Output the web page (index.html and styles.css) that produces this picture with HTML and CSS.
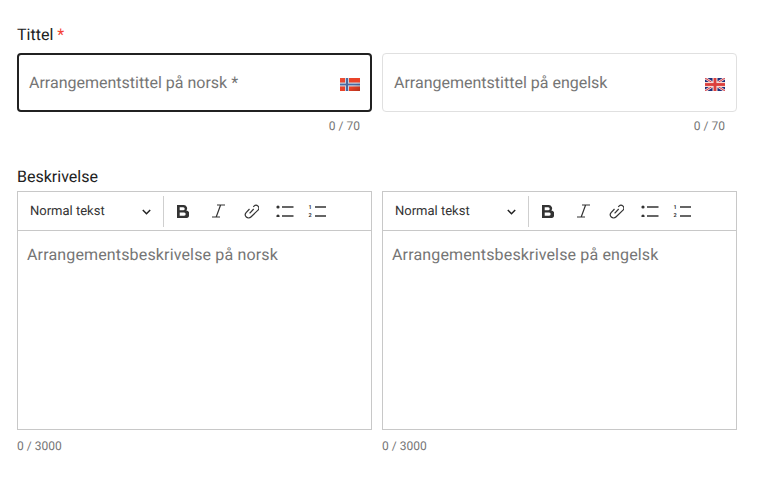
FILE: index.html
```html
<!DOCTYPE html>
<html lang="no">
<head>
<meta charset="utf-8">
<title>Arrangement</title>
<link rel="stylesheet" href="styles.css">
</head>
<body>
<main class="form">
  <section class="group group-title">
    <label class="label">Tittel <span class="req">*</span></label>
    <div class="columns">
      <div class="field">
        <div class="input focused"><span class="placeholder">Arrangementstittel på norsk *</span>
          <svg class="flag" viewBox="0 0 20 13"><defs><linearGradient id="shA" x1="0" y1="0" x2="1" y2="1"><stop offset="0" stop-color="#fff" stop-opacity=".08"/><stop offset=".6" stop-color="#000" stop-opacity="0"/><stop offset="1" stop-color="#000" stop-opacity=".25"/></linearGradient></defs><rect width="20" height="13" fill="#ed4328"/><rect x="5" width="4" height="13" fill="#cfd3e0"/><rect y="4.5" width="20" height="4" fill="#cfd3e0"/><rect x="6.2" width="1.6" height="13" fill="#27508f"/><rect y="5.7" width="20" height="1.6" fill="#4a6ba3"/><rect width="20" height="13" fill="url(#shA)"/></svg>
        </div>
        <div class="count count-right">0 / 70</div>
      </div>
      <div class="field">
        <div class="input"><span class="placeholder">Arrangementstittel på engelsk</span>
          <svg class="flag" viewBox="0 0 20 13"><rect width="20" height="13" fill="#1f2f7a"/><path d="M0 0L20 13M20 0L0 13" stroke="#f3d6d6" stroke-width="2.6"/><path d="M0 0L20 13M20 0L0 13" stroke="#d5404a" stroke-width="1"/><rect x="7.5" width="5" height="13" fill="#f6dcd6"/><rect y="4" width="20" height="5" fill="#f6dcd6"/><rect x="8.6" width="2.8" height="13" fill="#dc3f3c"/><rect y="5.1" width="20" height="2.8" fill="#dc3f3c"/></svg>
        </div>
        <div class="count count-right">0 / 70</div>
      </div>
    </div>
  </section>
  <section class="group">
    <label class="label">Beskrivelse</label>
    <div class="columns">
      <div class="field">
        <div class="editor">
          <div class="toolbar">
            <div class="select"><span>Normal tekst</span>
              <svg class="chev" viewBox="0 0 9 6"><path d="M.8 1l3.7 3.7L8.2 1" fill="none" stroke="#222" stroke-width="1.5"/></svg>
            </div>
            <span class="divider"></span>
            <svg class="tool t-b" viewBox="0 0 12 13"><path d="M0 0h6.6a3.4 3.4 0 0 1 2.7 5.6A3.6 3.6 0 0 1 8 13H0zM2.7 2.3v3h3.5a1.5 1.5 0 0 0 0-3zM2.7 7.5v3.2h4.4a1.6 1.6 0 0 0 0-3.2z" fill="#333" fill-rule="evenodd"/></svg>
            <svg class="tool t-i" viewBox="0 0 13 14"><path d="M5 1h8M0 13h8M8.6 1L4.2 13" fill="none" stroke="#333" stroke-width="1.2"/></svg>
            <svg class="tool t-l" viewBox="0 0 15 15"><g fill="none" stroke="#333" stroke-width="1.2"><path d="M9.3 2.9l.7-.8a2.9 2.9 0 0 1 4 .1 2.9 2.9 0 0 1 0 4L6.9 13a3.2 3.2 0 0 1-4.6 0 3.2 3.2 0 0 1-.2-4.4L5.5 5"/><path d="M5.6 9.4L9.7 5"/></g></svg>
            <svg class="tool t-u" viewBox="0 0 18 12"><circle cx="2" cy="2" r="1.6" fill="#333"/><circle cx="2" cy="11" r="1.6" fill="#333"/><path d="M6 2h11.5M6 11h11.5" stroke="#333" stroke-width="1.3"/></svg>
            <svg class="tool t-o" viewBox="0 0 18 12"><text x="0.5" y="4.4" class="num">1</text><text x="0.5" y="12" class="num">2</text><path d="M7 2h11M7 11h11" stroke="#333" stroke-width="1.3"/></svg>
          </div>
          <div class="area"><span class="placeholder">Arrangementsbeskrivelse på norsk</span></div>
        </div>
        <div class="count">0 / 3000</div>
      </div>
      <div class="field">
        <div class="editor">
          <div class="toolbar">
            <div class="select"><span>Normal tekst</span>
              <svg class="chev" viewBox="0 0 9 6"><path d="M.8 1l3.7 3.7L8.2 1" fill="none" stroke="#222" stroke-width="1.5"/></svg>
            </div>
            <span class="divider"></span>
            <svg class="tool t-b" viewBox="0 0 12 13"><path d="M0 0h6.6a3.4 3.4 0 0 1 2.7 5.6A3.6 3.6 0 0 1 8 13H0zM2.7 2.3v3h3.5a1.5 1.5 0 0 0 0-3zM2.7 7.5v3.2h4.4a1.6 1.6 0 0 0 0-3.2z" fill="#333" fill-rule="evenodd"/></svg>
            <svg class="tool t-i" viewBox="0 0 13 14"><path d="M5 1h8M0 13h8M8.6 1L4.2 13" fill="none" stroke="#333" stroke-width="1.2"/></svg>
            <svg class="tool t-l" viewBox="0 0 15 15"><g fill="none" stroke="#333" stroke-width="1.2"><path d="M9.3 2.9l.7-.8a2.9 2.9 0 0 1 4 .1 2.9 2.9 0 0 1 0 4L6.9 13a3.2 3.2 0 0 1-4.6 0 3.2 3.2 0 0 1-.2-4.4L5.5 5"/><path d="M5.6 9.4L9.7 5"/></g></svg>
            <svg class="tool t-u" viewBox="0 0 18 12"><circle cx="2" cy="2" r="1.6" fill="#333"/><circle cx="2" cy="11" r="1.6" fill="#333"/><path d="M6 2h11.5M6 11h11.5" stroke="#333" stroke-width="1.3"/></svg>
            <svg class="tool t-o" viewBox="0 0 18 12"><text x="0.5" y="4.4" class="num">1</text><text x="0.5" y="12" class="num">2</text><path d="M7 2h11M7 11h11" stroke="#333" stroke-width="1.3"/></svg>
          </div>
          <div class="area"><span class="placeholder">Arrangementsbeskrivelse på engelsk</span></div>
        </div>
        <div class="count">0 / 3000</div>
      </div>
    </div>
  </section>
</main>
</body>
</html>
```
FILE: styles.css
```css
* { box-sizing: border-box; }
html, body { margin: 0; padding: 0; background: #fff; }
body { font-family: Roboto, "Liberation Sans", sans-serif; color: #212121; text-rendering: geometricPrecision; }
.form { padding: 26px 0 0 17px; width: 765px; }
.group-title { height: 142px; }
.label { display: block; font-size: 16px; line-height: 18px; margin-bottom: 9px; }
.group:not(.group-title) .label { margin-bottom: 5px; }
.req { color: #f44336; }
.columns { display: grid; grid-template-columns: 355px 355px; column-gap: 10px; }
.input { height: 59px; border: 1px solid #e0e0e0; border-radius: 4px; display: flex; align-items: center; justify-content: space-between; padding: 0 11px; }
.input.focused { border: 2px solid #212121; padding: 0 10px; }
.placeholder { font-size: 16px; color: #757575; line-height: 20px; }
.area .placeholder { letter-spacing: .15px; }
.flag { width: 20px; height: 13px; flex: none; filter: blur(.3px); margin-top: 3px; }
.count { font-size: 12px; line-height: 14px; color: #757575; margin-top: 9px; }
.count-right { text-align: right; padding-right: 12px; margin-top: 7px; }
.editor { height: 239px; border: 1px solid #c8c8c8; }
.toolbar { height: 39px; border-bottom: 1px solid #c8c8c8; display: flex; align-items: center; padding-left: 12px; }
.select { width: 133px; padding-right: 12px; display: flex; align-items: center; justify-content: space-between; font-size: 13px; color: #333; }
.chev { width: 9px; height: 6px; margin-top: 2px; }
.divider { width: 1px; height: 31px; background: #cfcfcf; margin-right: 13px; }
.tool { display: block; flex: none; }
.t-b { width: 12px; height: 13px; }
.t-i { width: 13px; height: 14px; margin-left: 23px; }
.t-l { width: 15px; height: 15px; margin-left: 19px; }
.t-u { width: 18px; height: 12px; margin-left: 17px; }
.t-o { width: 18px; height: 12px; margin-left: 14px; }
.num { font: 700 5.5px Roboto, sans-serif; fill: #333; }
.area { padding: 14px 9px; }
```
